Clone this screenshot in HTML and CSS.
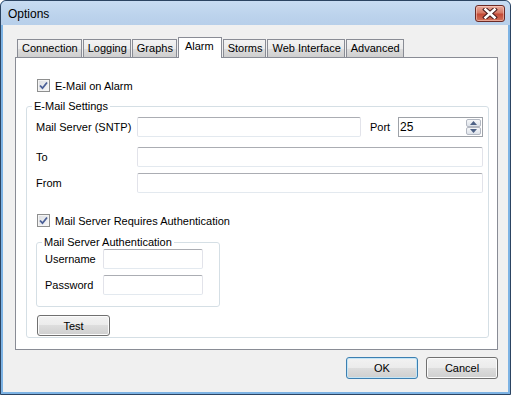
FILE: index.html
```html
<!DOCTYPE html>
<html lang="en">
<head>
  <meta charset="UTF-8">
  <title>Options</title>
  <link rel="stylesheet" href="styles.css">
</head>
<body>
  <div class="window">
    <div class="titlebar">
      <span class="title">Options</span>
      <button class="close-btn" title="Close">
        <svg width="16" height="11" viewBox="0 0 16 11">
          <path d="M3.5 1.5 L12.5 9.5 M12.5 1.5 L3.5 9.5" stroke="#4a1d1d" stroke-width="4.6" stroke-linecap="square"/>
          <path d="M3.5 1.5 L12.5 9.5 M12.5 1.5 L3.5 9.5" stroke="#ffffff" stroke-width="2.6" stroke-linecap="square"/>
        </svg>
      </button>
    </div>

    <div class="client">
      <div class="tabs">
        <div class="tab">Connection</div>
        <div class="tab">Logging</div>
        <div class="tab">Graphs</div>
        <div class="tab active">Alarm</div>
        <div class="tab">Storms</div>
        <div class="tab">Web Interface</div>
        <div class="tab">Advanced</div>
      </div>

      <div class="tab-panel">
        <label class="check-row">
          <span class="checkbox">
            <svg width="9" height="9" viewBox="0 0 9 9"><path d="M1 4.5 L3.5 7.2 L8 1.5" fill="none" stroke="#4a5f97" stroke-width="1.8"/></svg>
          </span>
          E-Mail on Alarm
        </label>

        <fieldset class="group email-group">
          <legend>E-Mail Settings</legend>
          <div class="form-grid">
            <label>Mail Server (SNTP)</label>
            <div class="server-line">
              <input type="text" class="text-box server">
              <span class="port-label">Port</span>
              <div class="spin">
                <input type="text" value="25">
                <div class="spin-buttons">
                  <span class="spin-btn"><svg width="7" height="4" viewBox="0 0 7 4"><path d="M0 4 L3.5 0 L7 4 Z" fill="#4d6185"/></svg></span>
                  <span class="spin-btn"><svg width="7" height="4" viewBox="0 0 7 4"><path d="M0 0 L3.5 4 L7 0 Z" fill="#4d6185"/></svg></span>
                </div>
              </div>
            </div>
            <label>To</label>
            <input type="text" class="text-box">
            <label>From</label>
            <input type="text" class="text-box">
          </div>

          <label class="check-row auth-check">
            <span class="checkbox">
              <svg width="9" height="9" viewBox="0 0 9 9"><path d="M1 4.5 L3.5 7.2 L8 1.5" fill="none" stroke="#4a5f97" stroke-width="1.8"/></svg>
            </span>
            Mail Server Requires Authentication
          </label>

          <fieldset class="group auth-group">
            <legend>Mail Server Authentication</legend>
            <div class="auth-grid">
              <label>Username</label>
              <input type="text" class="text-box">
              <label>Password</label>
              <input type="password" class="text-box">
            </div>
          </fieldset>

          <button class="win-btn test-btn">Test</button>
        </fieldset>
      </div>

      <div class="dialog-buttons">
        <button class="win-btn default">OK</button>
        <button class="win-btn">Cancel</button>
      </div>
    </div>
  </div>
</body>
</html>
```

FILE: styles.css
```css
* {
  box-sizing: border-box;
}

body {
  margin: 0;
  font-family: "Liberation Sans", Arial, sans-serif;
  font-size: 11px;
  color: #000;
  background: #fff;
}

.window {
  width: 511px;
  height: 395px;
  border: 1px solid #2c4462;
  border-radius: 6px 6px 0 0;
  background: #7db3e4;
  padding: 0 2px 2px 2px;
  display: flex;
  flex-direction: column;
  overflow: hidden;
}

.titlebar {
  height: 24px;
  margin: 0 -2px;
  padding-left: 7px;
  display: flex;
  justify-content: space-between;
  background: linear-gradient(#c8dcf2, #bcd3ec 60%, #b7cfea);
  border-radius: 5px 5px 0 0;
}

.title {
  font-size: 12px;
  line-height: 26px;
}

.close-btn {
  width: 30px;
  height: 17px;
  margin: 4px 5px 0 0;
  padding: 0;
  border: 1px solid #6b2a26;
  border-radius: 3px;
  background: linear-gradient(#e9aa9c, #d67a66 45%, #c34a36 55%, #d2735c);
  box-shadow: inset 0 0 0 1px rgba(255, 220, 210, 0.5);
  display: flex;
  align-items: center;
  justify-content: center;
}

.client {
  flex: 1;
  background: #f0f0f0;
  padding: 12px 10px 0 12px;
  display: flex;
  flex-direction: column;
}

/* tab strip */
.tabs {
  display: flex;
  align-items: flex-end;
  height: 20px;
  margin-left: 2px;
}

.tab {
  height: 18px;
  padding: 0 3px 0 4px;
  line-height: 17px;
  border: 1px solid #898c95;
  border-bottom: none;
  background: linear-gradient(#f3f3f3, #ebebeb 50%, #dddddd 50%, #cfcfcf);
  white-space: nowrap;
}

.tab + .tab {
  margin-left: 1px;
}

.tab.active {
  height: 21px;
  margin-bottom: -1px;
  padding: 0 7px 0 6px;
  line-height: 16px;
  background: #fff;
  position: relative;
  z-index: 1;
}

.tab-panel {
  background: #fff;
  border: 1px solid #898c95;
  padding: 21px 8px 11px 10px;
}

.check-row {
  display: flex;
  align-items: center;
  gap: 5px;
  height: 13px;
  margin-left: 11px;
}

.checkbox {
  width: 13px;
  height: 13px;
  border: 1px solid #8e8f8f;
  background: linear-gradient(135deg, #dcdee2, #f7f7f8);
  box-shadow: inset 0 0 0 1px #f4f4f4;
  display: flex;
  align-items: center;
  justify-content: center;
}

/* group boxes */
.group {
  margin: 0;
  padding: 0;
  border: 1px solid #d5dfe5;
  border-radius: 3px;
  min-width: 0;
}

.group legend {
  padding: 0 2px;
  line-height: 13px;
  height: 13px;
}

.email-group {
  margin-top: 8px;
  padding: 4px 5px 1px 9px;
}

.email-group > legend {
  margin-left: -4px;
}

.form-grid {
  display: grid;
  grid-template-columns: 101px 1fr;
  grid-template-rows: 30px 26px 20px;
  align-items: start;
}

.form-grid label,
.auth-grid label {
  line-height: 20px;
}

.server-line {
  display: flex;
}

.port-label {
  width: 28px;
  margin-left: 9px;
  line-height: 20px;
}

.text-box {
  height: 20px;
  width: 100%;
  border: 1px solid #e2e3ea;
  border-top-color: #abadb3;
  border-bottom-color: #e3e9ef;
  border-radius: 2px;
  background: #fff;
  font: inherit;
  padding: 0 2px;
}

.server {
  flex: 1;
  width: auto;
}

.spin {
  width: 85px;
  height: 20px;
  border: 1px solid #9ea2a8;
  display: flex;
  align-items: center;
  background: #fff;
}

.spin input {
  flex: 1;
  min-width: 0;
  border: none;
  font: inherit;
  font-size: 12px;
  padding: 0 1px;
  outline: none;
}

.spin-buttons {
  display: flex;
  flex-direction: column;
  margin-right: 1px;
}

.spin-btn {
  width: 15px;
  height: 8px;
  border: 1px solid #b3b8c2;
  border-radius: 2px;
  background: linear-gradient(#f6f7f9, #dde2ea);
  display: flex;
  align-items: center;
  justify-content: center;
}

.auth-check {
  margin: 21px 0 0 1px;
}

.auth-group {
  width: 184px;
  margin-top: 9px;
  padding: 0 8px 11px 8px;
}

.auth-group > legend {
  margin-left: -3px;
}

.auth-grid {
  display: grid;
  grid-template-columns: 58px 100px;
  row-gap: 6px;
}

/* push buttons */
.win-btn {
  height: 22px;
  font: inherit;
  color: #000;
  border: 1px solid #707070;
  border-radius: 3px;
  background: linear-gradient(#f2f2f2, #ebebeb 50%, #dddddd 50%, #cfcfcf);
  box-shadow: inset 0 0 0 1px #fbfbfb;
  padding: 0;
}

.test-btn {
  width: 73px;
  height: 21px;
  margin: 8px 0 0 1px;
  display: block;
}

.win-btn.default {
  border-color: #3c7fb1;
  box-shadow: inset 0 0 0 1px #c4e5f6;
}

.dialog-buttons {
  display: flex;
  justify-content: flex-end;
  gap: 8px;
  margin-top: 7px;
}

.dialog-buttons .win-btn {
  width: 72px;
}
```
